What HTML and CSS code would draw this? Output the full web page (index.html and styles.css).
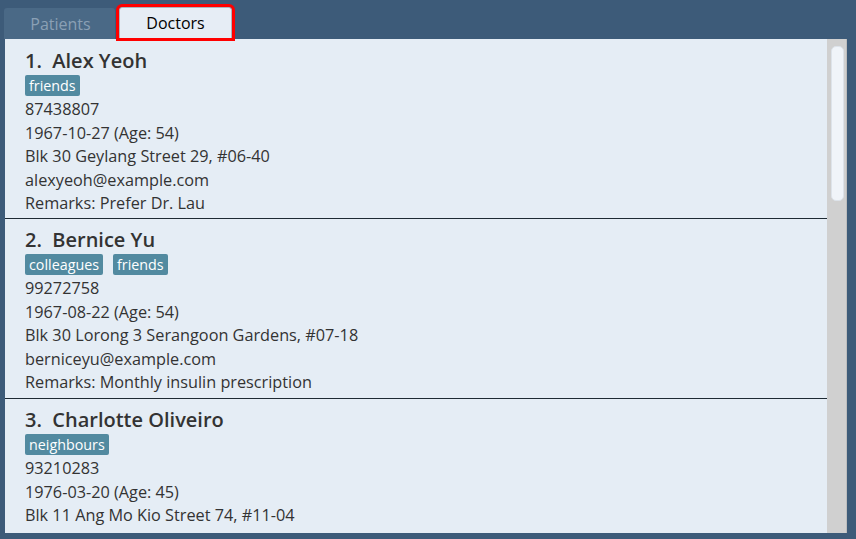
FILE: index.html
```html
<!DOCTYPE html>
<html>
<head>
<meta charset="utf-8">
<link rel="stylesheet" href="styles.css">
</head>
<body>
<div class="tabs">
  <div class="tab tab-inactive">Patients</div>
  <div class="tab tab-active">Doctors</div>
</div>
<div class="panel">
  <div class="list">
    <div class="card">
      <div class="name">1.&nbsp; Alex Yeoh</div>
      <div class="tags"><span class="tag">friends</span></div>
      <div class="line">87438807</div>
      <div class="line">1967-10-27 (Age: 54)</div>
      <div class="line">Blk 30 Geylang Street 29, #06-40</div>
      <div class="line">alexyeoh@example.com</div>
      <div class="line">Remarks: Prefer Dr. Lau</div>
    </div>
    <div class="card">
      <div class="name">2.&nbsp; Bernice Yu</div>
      <div class="tags"><span class="tag">colleagues</span><span class="tag">friends</span></div>
      <div class="line">99272758</div>
      <div class="line">1967-08-22 (Age: 54)</div>
      <div class="line">Blk 30 Lorong 3 Serangoon Gardens, #07-18</div>
      <div class="line">berniceyu@example.com</div>
      <div class="line">Remarks: Monthly insulin prescription</div>
    </div>
    <div class="card">
      <div class="name">3.&nbsp; Charlotte Oliveiro</div>
      <div class="tags"><span class="tag">neighbours</span></div>
      <div class="line">93210283</div>
      <div class="line">1976-03-20 (Age: 45)</div>
      <div class="line">Blk 11 Ang Mo Kio Street 74, #11-04</div>
      <div class="line">charlotte@example.com</div>
      <div class="line">Remarks: Allergic to penicillin</div>
    </div>
  </div>
  <div class="scrollbar"><div class="thumb"></div></div>
</div>
</body>
</html>
```
FILE: styles.css
```css
html, body {
  margin: 0;
  padding: 0;
}
body {
  width: 856px;
  height: 539px;
  background: #3d5b79;
  font-family: "Open Sans", "Noto Sans", sans-serif;
  overflow: hidden;
}
.tabs {
  height: 39px;
  display: flex;
  align-items: flex-end;
  padding-left: 4px;
  gap: 4px;
  box-sizing: border-box;
}
.tab {
  box-sizing: border-box;
  display: flex;
  align-items: center;
  justify-content: center;
  font-size: 16px;
  border-radius: 3px 3px 0 0;
}
.tab-inactive {
  width: 111px;
  height: 31px;
  padding-left: 2px;
  background: #4a6986;
  color: #8aa0b5;
}
.tab-active {
  position: relative;
  z-index: 1;
  width: 113px;
  height: 31px;
  margin-bottom: 1px;
  background: #e6edf5;
  border: 1px solid #aab4be;
  border-bottom: none;
  color: #000;
  outline: 3px solid #ff0000;
}
.panel {
  margin-left: 5px;
  width: 842px;
  height: 494px;
  background: #e5edf5;
  display: flex;
}
.list {
  flex: 1;
  overflow: hidden;
  padding-top: 1px;
}
.card {
  height: 179px;
  box-sizing: border-box;
  border-bottom: 1px solid #1e2a33;
  padding: 8px 0 0 20px;
  color: #333;
}
.card + .card {
  height: 180px;
}
.name {
  font-size: 20px;
  font-weight: 600;
  line-height: 26px;
  color: #333;
  white-space: pre;
}
.tags {
  display: flex;
  gap: 10px;
  margin-top: 1px;
  height: 23px;
}
.tag {
  height: 21px;
  background: #528aa0;
  color: #fff;
  font-size: 14.3px;
  line-height: 21px;
  padding: 0 4px;
  border-radius: 2px;
}
.line {
  font-size: 16.25px;
  line-height: 23.5px;
}
.scrollbar {
  width: 20px;
  background: #d0d0d0;
  border-right: 1px solid #bdbdbd;
  box-sizing: border-box;
  padding: 7px 2px 0 4px;
}
.thumb {
  height: 155px;
  background: #f0f4f9;
  border-radius: 5px;
  border: 1px solid #dde3ea;
  box-sizing: border-box;
}
```
